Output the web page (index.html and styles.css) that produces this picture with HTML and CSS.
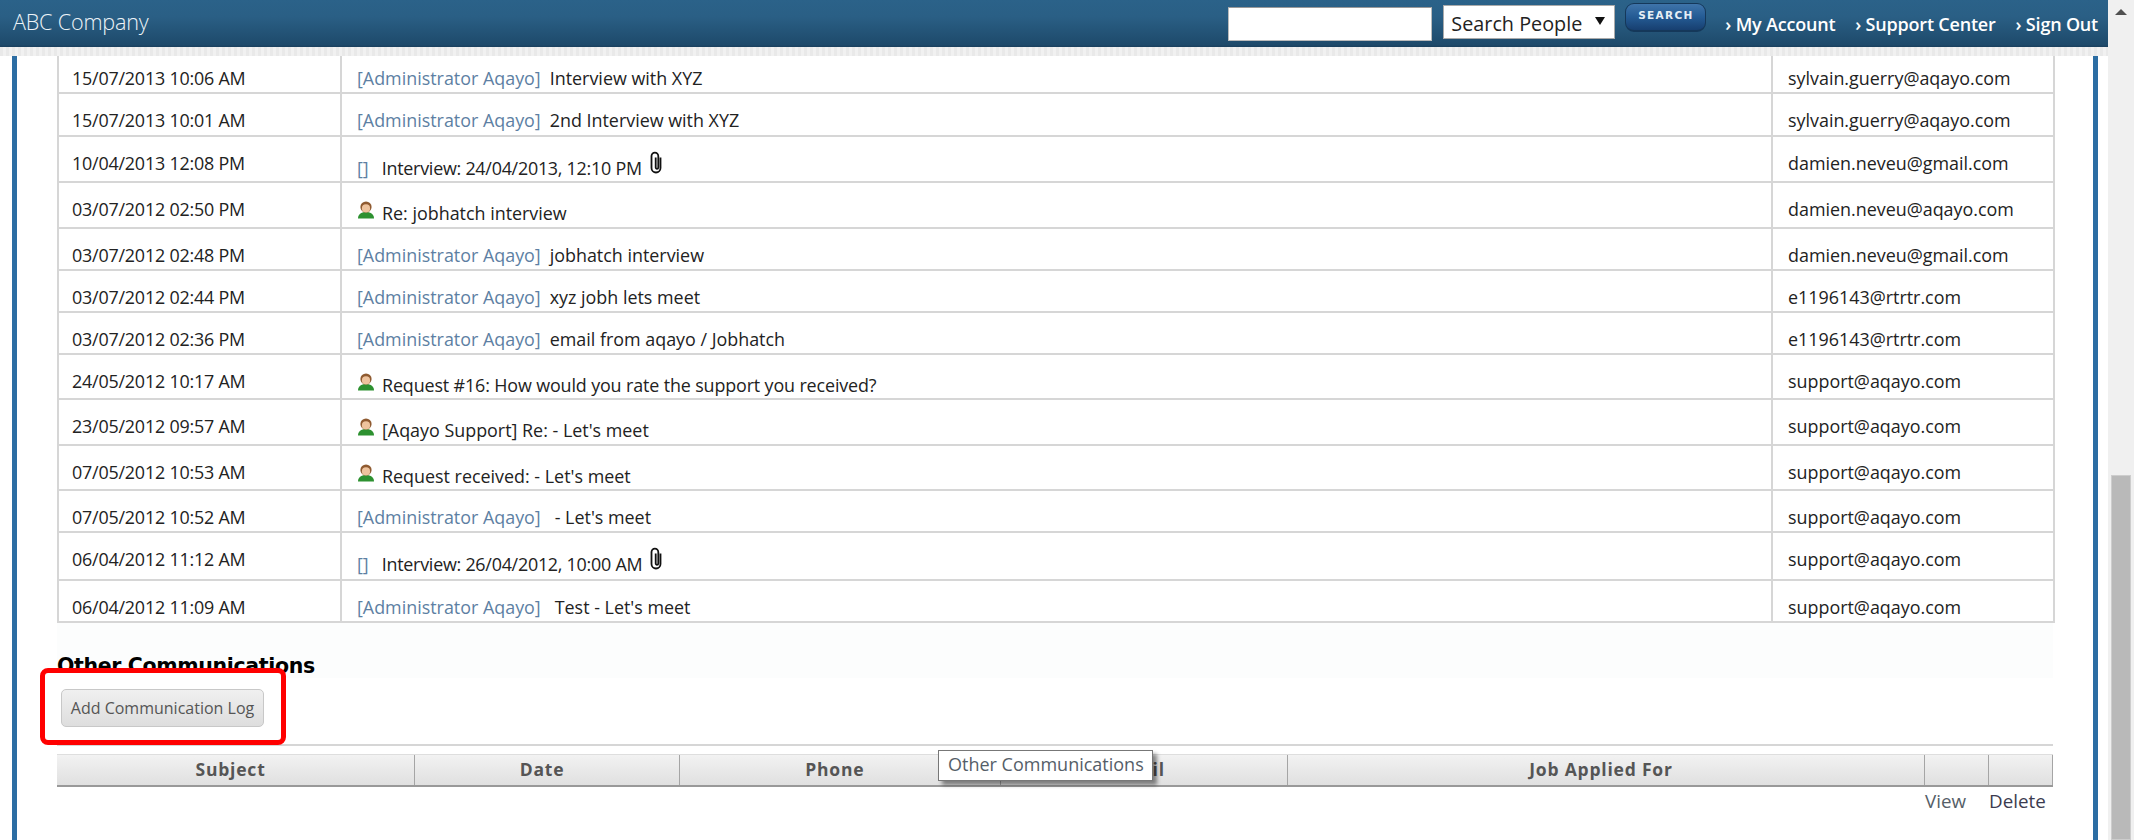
FILE: index.html
```html
<!DOCTYPE html>
<html lang="en">
<head>
<meta charset="utf-8">
<title>ABC Company</title>
<link rel="stylesheet" href="styles.css">
</head>
<body>
<div class="page">
  <div class="main">
    <header class="topbar">
      <div class="brand">ABC Company</div>
      <div class="tools">
        <input class="search-input" type="text" aria-label="Search">
        <div class="search-select"><span>Search People</span><i class="caret"></i></div>
        <button class="search-btn">SEARCH</button>
        <nav class="nav">
          <a>› My Account</a>
          <a>› Support Center</a>
          <a>› Sign Out</a>
        </nav>
      </div>
    </header>
    <div class="strip"></div>
    <div class="panel">
      <table class="mail">
        <colgroup><col class="c-date"><col class="c-subj"><col class="c-mail"></colgroup>
        <tbody>
          <tr class="r37"><td class="date first">15/07/2013 10:06 AM</td><td class="first"><a class="who">[Administrator Aqayo]</a><span class="sub">Interview with XYZ</span></td><td class="addr first">sylvain.guerry@aqayo.com</td></tr>
          <tr class="r43"><td class="date">15/07/2013 10:01 AM</td><td><a class="who">[Administrator Aqayo]</a><span class="sub">2nd Interview with XYZ</span></td><td class="addr">sylvain.guerry@aqayo.com</td></tr>
          <tr class="r46"><td class="date">10/04/2013 12:08 PM</td><td class="att"><a class="who">[]</a><span class="sub wide">Interview: 24/04/2013, 12:10 PM</span><svg class="clip" viewBox="0 0 14 23"><path d="M11.500 6.500V17a4.500 4.500 0 0 1-9 0V5a3.400 3.400 0 0 1 6.800 0v11.500a1.300 1.300 0 0 1-2.600 0V6.500"/></svg></td><td class="addr">damien.neveu@gmail.com</td></tr>
          <tr class="r46"><td class="date">03/07/2012 02:50 PM</td><td class="low"><svg class="person" viewBox="0 0 18 18"><path class="body" d="M1 17.500c0-4 3-6.500 8-6.500s8 2.500 8 6.500z"/><circle class="hair" cx="9" cy="6" r="5.600"/><circle class="face" cx="9" cy="7.400" r="4.100"/></svg><span class="sub pers">Re: jobhatch interview</span></td><td class="addr">damien.neveu@aqayo.com</td></tr>
          <tr class="r42"><td class="date">03/07/2012 02:48 PM</td><td><a class="who">[Administrator Aqayo]</a><span class="sub">jobhatch interview</span></td><td class="addr">damien.neveu@gmail.com</td></tr>
          <tr class="r42"><td class="date">03/07/2012 02:44 PM</td><td><a class="who">[Administrator Aqayo]</a><span class="sub">xyz jobh lets meet</span></td><td class="addr">e1196143@rtrtr.com</td></tr>
          <tr class="r42"><td class="date">03/07/2012 02:36 PM</td><td><a class="who">[Administrator Aqayo]</a><span class="sub">email from aqayo / Jobhatch</span></td><td class="addr">e1196143@rtrtr.com</td></tr>
          <tr class="r45"><td class="date">24/05/2012 10:17 AM</td><td class="low"><svg class="person" viewBox="0 0 18 18"><path class="body" d="M1 17.500c0-4 3-6.500 8-6.500s8 2.500 8 6.500z"/><circle class="hair" cx="9" cy="6" r="5.600"/><circle class="face" cx="9" cy="7.400" r="4.100"/></svg><span class="sub pers tight">Request #16: How would you rate the support you received?</span></td><td class="addr">support@aqayo.com</td></tr>
          <tr class="r46"><td class="date">23/05/2012 09:57 AM</td><td class="low"><svg class="person" viewBox="0 0 18 18"><path class="body" d="M1 17.500c0-4 3-6.500 8-6.500s8 2.500 8 6.500z"/><circle class="hair" cx="9" cy="6" r="5.600"/><circle class="face" cx="9" cy="7.400" r="4.100"/></svg><span class="sub pers">[Aqayo Support] Re: - Let's meet</span></td><td class="addr">support@aqayo.com</td></tr>
          <tr class="r45"><td class="date">07/05/2012 10:53 AM</td><td class="low"><svg class="person" viewBox="0 0 18 18"><path class="body" d="M1 17.500c0-4 3-6.500 8-6.500s8 2.500 8 6.500z"/><circle class="hair" cx="9" cy="6" r="5.600"/><circle class="face" cx="9" cy="7.400" r="4.100"/></svg><span class="sub pers">Request received: - Let's meet</span></td><td class="addr">support@aqayo.com</td></tr>
          <tr class="r42"><td class="date">07/05/2012 10:52 AM</td><td><a class="who">[Administrator Aqayo]</a><span class="sub gap2">- Let's meet</span></td><td class="addr">support@aqayo.com</td></tr>
          <tr class="r48"><td class="date">06/04/2012 11:12 AM</td><td class="att"><a class="who">[]</a><span class="sub wide">Interview: 26/04/2012, 10:00 AM</span><svg class="clip" viewBox="0 0 14 23"><path d="M11.500 6.500V17a4.500 4.500 0 0 1-9 0V5a3.400 3.400 0 0 1 6.800 0v11.500a1.300 1.300 0 0 1-2.600 0V6.500"/></svg></td><td class="addr">support@aqayo.com</td></tr>
          <tr class="r42"><td class="date">06/04/2012 11:09 AM</td><td><a class="who">[Administrator Aqayo]</a><span class="sub gap2">Test - Let's meet</span></td><td class="addr">support@aqayo.com</td></tr>
        </tbody>
      </table>

      <section class="other">
        <h2 class="other-title">Other Communications</h2>
        <div class="annotated">
          <button class="add-btn">Add Communication Log</button>
        </div>
      </section>
      <hr class="rule">
      <div class="head-wrap">
        <div class="grid-head">
          <div class="gh g1">Subject</div>
          <div class="gh g2">Date</div>
          <div class="gh g3">Phone</div>
          <div class="gh g4">Email</div>
          <div class="gh g5">Job Applied For</div>
          <div class="gh g6"></div>
          <div class="gh g7"></div>
        </div>
        <div class="tooltip">Other Communications</div>
      </div>
      <div class="actions"><a class="view">View</a><a class="del">Delete</a></div>
    </div>
  </div>
  <aside class="scrollbar">
    <i class="arrow"></i>
    <div class="thumb"></div>
  </aside>
</div>
</body>
</html>
```
FILE: styles.css
```css
* { box-sizing: border-box; }
html, body { margin: 0; padding: 0; height: 100%; overflow: hidden; background: #fff; }
body { font-family: "Open Sans", "Noto Sans", "DejaVu Sans", sans-serif; font-size: 17.9px; color: #222; }
.page { display: flex; width: 2134px; height: 840px; }
.main { width: 2108px; display: flex; flex-direction: column; height: 840px; overflow: hidden; }

.topbar { height: 47px; flex: none; display: flex; justify-content: space-between; background: linear-gradient(#2b6289 0%, #2a5f85 35%, #1e4a6b 95%, #1a3f5d 100%); color: #fff; }
.brand { font-size: 21.6px; font-weight: 300; line-height: 44px; padding-left: 13px; letter-spacing: -.2px; color: #eef4f8; }
.tools { display: flex; align-items: flex-start; }
.search-input { width: 204px; height: 34px; margin: 7px 11px 0 0; border: 1px solid #bbb; border-top-color: #999; background: #fff; padding: 0; }
.search-select { width: 172px; height: 34px; margin: 5px 10px 0 0; border: 1px solid #aaa; background: #fff; color: #222; font-size: 19.8px; line-height: 36px; padding-left: 7px; position: relative; }
.caret { position: absolute; right: 9px; top: 11px; border: 5px solid transparent; border-top: 8px solid #111; border-bottom: 0; }
.search-btn { width: 81px; height: 29px; margin: 3px 19px 0 0; border: 1px solid #15385a; border-bottom-width: 2px; border-radius: 9px; background: linear-gradient(#3f74aa 0%, #245b94 50%, #173f70 100%); color: #e6eef5; font: 700 10.5px/1 "DejaVu Sans", sans-serif; letter-spacing: 1.3px; padding: 0 0 4px; }
.nav { display: flex; gap: 20px; padding-right: 10px; font-size: 18px; font-weight: 600; line-height: 48px; letter-spacing: -.2px; white-space: nowrap; }

.strip { height: 9px; flex: none; background: repeating-linear-gradient(90deg, #e9e9e9 0 3px, #f1f1f1 3px 6px); }

.panel { flex: 1; margin-left: 12px; margin-right: 10px; border-left: 5px solid #2c6da3; border-right: 5px solid #2c6da3; padding: 0 40px; position: relative; min-height: 0; }

.mail { width: 1996px; table-layout: fixed; border-collapse: collapse; background: #fff; }
.c-date { width: 283px; }
.c-subj { width: 1431px; }
.c-mail { width: 282px; }
.mail td { border: 2px solid #d6d6d6; border-top: 0; padding: 14px 0 0 13px; vertical-align: top; line-height: 24px; white-space: nowrap; overflow: hidden; }
.mail td.date { letter-spacing: -.2px; }
.mail td + td { padding-top: 14px; padding-left: 15px; }
.mail td:last-child { padding-left: 15px; }
.mail td.low { padding-top: 18px; }
.mail td.att { padding-top: 19px; }
.mail td.addr { padding-top: 14px; }
.mail td.first { padding-top: 10px; }
.r37 { height: 37px; }
.r42 { height: 42px; }
.r43 { height: 43px; }
.r45 { height: 45px; }
.r46 { height: 46px; }
.r48 { height: 48px; }
.who { color: #5d7fa3; }
.sub { margin-left: 9px; color: #222; }
.sub.gap2 { margin-left: 14px; }
.sub.wide { margin-left: 13px; letter-spacing: -.25px; }
.sub.pers { margin-left: 7px; }
.sub.tight { letter-spacing: -.13px; }
.clip { width: 14px; height: 23px; margin-left: 7px; vertical-align: top; position: relative; top: -5px; fill: none; stroke: #111; stroke-width: 1.8; }
.person { width: 18px; height: 18px; vertical-align: top; position: relative; top: 0; }
.person .body { fill: #2d9130; }
.person .face { fill: #eec39d; }
.person .hair { fill: #8f5a30; }

.other { height: 121px; position: relative; padding-top: 0; }
.other-title { margin: 0; height: 55px; padding-top: 31px; background: #fcfdfd; font: 700 20.5px/24px "DejaVu Sans", sans-serif; letter-spacing: -.35px; color: #000; width: 100%; }
.annotated { position: absolute; left: -17px; top: 45px; width: 246px; height: 77px; background: #fff; border: 5px solid #f00; border-radius: 8px; z-index: 2; }
.add-btn { position: absolute; left: 16px; top: 16px; width: 203px; height: 38px; border: 1px solid #c8c8c8; border-radius: 5px; background: linear-gradient(#f0f0f0, #dedede); color: #555; font-family: "Open Sans", sans-serif; font-size: 16px; padding: 0; }

.rule { margin: 0; height: 2px; border: 0; background: #d6d6d6; width: 1996px; }
.head-wrap { position: relative; margin-top: 8px; }
.grid-head { display: grid; grid-template-columns: 358px 265px 320.5px 287.5px 637px 64px 64px; height: 33px; width: 1996px; background: linear-gradient(#f2f2f2, #e0e0e0); border-top: 1px solid #dedede; border-bottom: 2px solid #999; }
.gh { border-right: 1px solid #a5a5a5; text-align: center; font-weight: 700; font-size: 17.5px; line-height: 29px; color: #555; letter-spacing: .8px; padding-right: 10px; }
.tooltip { position: absolute; left: 881px; top: -4px; width: 215px; height: 31px; background: #fff; border: 1px solid #777; box-shadow: 4px 4px 4px rgba(0,0,0,.45); font-size: 18px; line-height: 27px; padding-left: 9px; color: #555e68; white-space: nowrap; z-index: 3; }
.actions { display: flex; width: 1996px; justify-content: flex-end; font-size: 18.8px; line-height: 22px; padding-top: 3px; color: #555e68; }
.view { width: 64px; }
.del { width: 64px; color: #3c3c50; }

.scrollbar { width: 26px; height: 840px; background: #f0f0f0; display: flex; flex-direction: column; align-items: center; position: relative; }
.arrow { margin-top: 9px; border: 6px solid transparent; border-bottom: 6px solid #505050; border-top: 0; }
.thumb { position: absolute; left: 3px; top: 475px; width: 20px; height: 365px; background: #b9b9b9; border: 1px solid #cdcdcd; }
```
